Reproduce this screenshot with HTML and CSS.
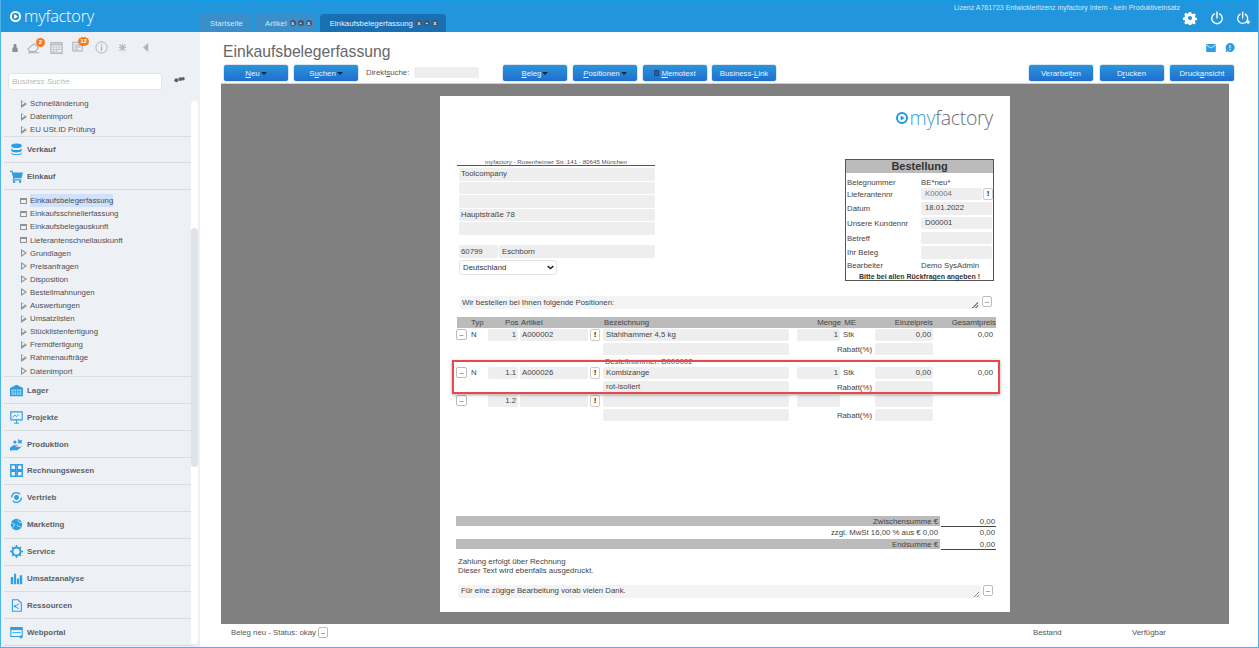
FILE: index.html
```html
<!DOCTYPE html>
<html lang="de">
<head>
<meta charset="utf-8">
<title>Einkaufsbelegerfassung</title>
<link rel="stylesheet" href="styles.css">
</head>
<body>
<div class="app">
  <header class="topbar">
    <div class="brand">
      <svg class="brand-mark" viewBox="0 0 12 12" width="11" height="11"><circle cx="6" cy="6" r="5" fill="none" stroke="#fff" stroke-width="2"/><path d="M4.6 3.4 8.6 6 4.6 8.6Z" fill="#fff"/></svg>
      <span class="brand-name">myfactory</span>
    </div>
    <nav class="tabs">
      <div class="tab"><span>Startseite</span></div>
      <div class="tab"><span>Artikel</span><i class="dot">s</i><i class="dot">▪</i><i class="dot">x</i></div>
      <div class="tab tab-active"><span>Einkaufsbelegerfassung</span><i class="dot">s</i><i class="dot">▪</i><i class="dot">x</i></div>
    </nav>
    <div class="top-right">
      <div class="licence">Lizenz A761723 Entwicklerlizenz myfactory Intern - kein Produktiveinsatz</div>
      <div class="top-icons">
        <svg viewBox="0 0 16 16" width="14" height="14"><path d="M6.700 1h2.600l.4 2 1.300.6 1.800-1.100 1.800 1.800-1.100 1.800.6 1.300 2 .4v2.400l-2 .4-.6 1.300 1.100 1.800-1.800 1.800-1.800-1.100-1.300.6-.4 2H6.700l-.4-2-1.300-.6-1.800 1.100-1.800-1.800 1.100-1.800-.6-1.300-2-.4V7.400l2-.4.6-1.300-1.100-1.800 1.800-1.800 1.800 1.100 1.300-.6Z" fill="#fff"/><circle cx="8" cy="8.100" r="2.400" fill="#2296dc"/></svg>
        <svg viewBox="0 0 16 16" width="14" height="14"><path d="M5 3.300a6 6 0 1 0 6 0" fill="none" stroke="#fff" stroke-width="1.600" stroke-linecap="round"/><path d="M8 1v7" stroke="#fff" stroke-width="1.600" stroke-linecap="round"/></svg>
        <svg viewBox="0 0 18 16" width="15" height="14"><path d="M5 3.300a6 6 0 1 0 6 0" fill="none" stroke="#fff" stroke-width="1.600" stroke-linecap="round"/><path d="M8 1v7" stroke="#fff" stroke-width="1.600" stroke-linecap="round"/><path d="M14.500 10.500v5M12 13h5" stroke="#fff" stroke-width="1.500"/></svg>
      </div>
    </div>
  </header>

  <div class="workspace">
    <aside class="sidebar">
      <div class="quick-icons">
        <svg class="qi-a" viewBox="0 0 12 14" width="8" height="12"><path d="M4 1h4v4l2 3v5H2V8l2-3Z" fill="#8b8f93"/></svg>
        <span class="quick-badge-wrap qi-b">
          <svg viewBox="0 0 16 14" width="14" height="12"><path d="M1 8 8 2l5 5-3 4H3ZM1 12.500h13" fill="none" stroke="#a9aeb3" stroke-width="1.200"/></svg>
          <b class="badge">2</b>
        </span>
        <svg class="qi-c" viewBox="0 0 14 14" width="13" height="13"><path d="M1 2h12v11H1Z" fill="none" stroke="#a9aeb3" stroke-width="1.200"/><path d="M1 4h12M3 6.500h2M6 6.500h2M9 6.500h2M3 9h2M6 9h2M9 9h2M3 11h2M6 11h2" stroke="#a9aeb3" stroke-width="1.200"/></svg>
        <span class="quick-badge-wrap qi-d">
          <svg viewBox="0 0 14 14" width="12" height="13"><path d="M1 1h11v10H1ZM3 4h7M3 6.500h7M3 9h4" fill="none" stroke="#a9aeb3" stroke-width="1.200"/></svg>
          <b class="badge badge-wide">12</b>
        </span>
        <svg class="qi-e" viewBox="0 0 14 14" width="13" height="13"><circle cx="7" cy="7" r="6" fill="none" stroke="#a9aeb3" stroke-width="1"/><path d="M7 6v4.500M7 3.500v1.300" stroke="#a9aeb3" stroke-width="1.400"/></svg>
        <svg class="qi-f" viewBox="0 0 12 12" width="9" height="9"><path d="M2 2l8 8M10 2l-8 8M6 1v10M1 6h10" stroke="#b4b9bd" stroke-width="1.500"/></svg>
        <svg viewBox="0 0 8 12" width="6" height="9"><path d="M7 0v12L0 6Z" fill="#b0b5b9"/></svg>
      </div>
      <div class="search-row">
        <div class="search-box">Business Suche</div>
        <svg viewBox="0 0 14 8" width="11" height="7"><circle cx="3" cy="5" r="2.500" fill="#5c6166"/><circle cx="8" cy="3.500" r="2.500" fill="#5c6166"/><circle cx="11.500" cy="3" r="2.200" fill="#5c6166"/></svg>
      </div>
      <div class="nav-wrap">
        <div class="nav">
          <div class="tree tree-first">
            <div class="leaf"><i class="arrow"></i>Schnelländerung</div>
            <div class="leaf"><i class="arrow"></i>Datenimport</div>
            <div class="leaf"><i class="arrow"></i>EU USt.ID Prüfung</div>
          </div>
          <div class="section">
            <svg viewBox="0 0 16 16" width="13" height="13"><ellipse cx="8" cy="3.500" rx="6.500" ry="2.800" fill="#2b9ee4"/><path d="M1.500 6c0 3.600 13 3.600 13 0v3c0 3.600-13 3.600-13 0Z" fill="#2b9ee4"/><path d="M1.500 11c0 3.600 13 3.600 13 0v1.500c0 3.200-13 3.200-13 0Z" fill="#2b9ee4"/></svg>
            <span>Verkauf</span>
          </div>
          <div class="section">
            <svg viewBox="0 0 16 16" width="13" height="13"><path d="M0 1h3l.8 2H16l-2 7H5.500l-.4 1.500H14V13H3l1-3L2 2.500H0Z" fill="#2b9ee4"/><circle cx="5" cy="14.500" r="1.500" fill="#2b9ee4"/><circle cx="12.500" cy="14.500" r="1.500" fill="#2b9ee4"/></svg>
            <span>Einkauf</span>
          </div>
          <div class="tree tree-main">
            <div class="leaf"><i class="form-icon"></i><mark class="hit">Einkaufsbelegerfassung</mark></div>
            <div class="leaf"><i class="form-icon"></i>Einkaufsschnellerfassung</div>
            <div class="leaf"><i class="form-icon"></i>Einkaufsbelegauskunft</div>
            <div class="leaf"><i class="form-icon"></i>Lieferantenschnellauskunft</div>
            <div class="leaf"><i class="arrow"></i>Grundlagen</div>
            <div class="leaf"><i class="arrow"></i>Preisanfragen</div>
            <div class="leaf"><i class="arrow"></i>Disposition</div>
            <div class="leaf"><i class="arrow"></i>Bestellmahnungen</div>
            <div class="leaf"><i class="arrow"></i>Auswertungen</div>
            <div class="leaf"><i class="arrow"></i>Umsatzlisten</div>
            <div class="leaf"><i class="arrow"></i>Stücklistenfertigung</div>
            <div class="leaf"><i class="arrow"></i>Fremdfertigung</div>
            <div class="leaf"><i class="arrow"></i>Rahmenaufträge</div>
            <div class="leaf"><i class="arrow"></i>Datenimport</div>
          </div>
          <div class="section">
            <svg viewBox="0 0 16 16" width="13" height="13"><path d="M0 5 8 1l8 4v10H0Z" fill="#2b9ee4"/><path d="M2 7h12v6H2Z" fill="#cfe8f8"/><path d="M2 9h12M2 11h12M5 7v6M8 7v6M11 7v6" stroke="#2b9ee4"/></svg>
            <span>Lager</span>
          </div>
          <div class="section">
            <svg viewBox="0 0 16 16" width="13" height="13"><path d="M1 1h14v10H1Z" fill="none" stroke="#2b9ee4" stroke-width="1.400"/><path d="M3 8l3-3 2 2 3-3M8 11v4M5 15h6" fill="none" stroke="#2b9ee4" stroke-width="1.200"/></svg>
            <span>Projekte</span>
          </div>
          <div class="section">
            <svg viewBox="0 0 16 16" width="13" height="13"><path d="M0 12 4 9h5l2 1H7v1h5l3-1-6 5H2l-2 1Z" fill="#2b9ee4"/><circle cx="6" cy="5" r="2" fill="#2b9ee4"/><path d="M10 1l2 2 3-1-1 3 1 2-3-1-2 1Z" fill="#2b9ee4"/></svg>
            <span>Produktion</span>
          </div>
          <div class="section">
            <svg viewBox="0 0 16 16" width="13" height="13"><path d="M1 1h6v6H1ZM9 1h6v6H9ZM1 9h6v6H1ZM9 9h6v6H9Z" fill="none" stroke="#2b9ee4" stroke-width="1.800"/></svg>
            <span>Rechnungswesen</span>
          </div>
          <div class="section">
            <svg viewBox="0 0 16 16" width="13" height="13"><path d="M2 8a6 6 0 0 1 10.500-4M14 8a6 6 0 0 1-10.500 4" fill="none" stroke="#2b9ee4" stroke-width="1.500"/><circle cx="8" cy="8" r="3" fill="#2b9ee4"/></svg>
            <span>Vertrieb</span>
          </div>
          <div class="section">
            <svg viewBox="0 0 16 16" width="13" height="13"><circle cx="8" cy="8" r="7" fill="#2b9ee4"/><path d="M1 6l5 2-3 4M9 2l3 4 3-1M8 9l5 2" fill="none" stroke="#cfe8f8"/></svg>
            <span>Marketing</span>
          </div>
          <div class="section">
            <svg viewBox="0 0 16 16" width="13" height="13"><circle cx="8" cy="8" r="5" fill="none" stroke="#2b9ee4" stroke-width="2.400"/><path d="M8 0v3M8 13v3M0 8h3M13 8h3M2.500 2.500l2 2M11.500 11.500l2 2M13.500 2.500l-2 2M4.500 11.500l-2 2" stroke="#2b9ee4" stroke-width="1.800"/></svg>
            <span>Service</span>
          </div>
          <div class="section">
            <svg viewBox="0 0 16 16" width="13" height="13"><path d="M1 6h3v9H1ZM5 2h2.500v13H5ZM8.500 8H11v7H8.500ZM12 4h3v11h-3Z" fill="#2b9ee4"/></svg>
            <span>Umsatzanalyse</span>
          </div>
          <div class="section">
            <svg viewBox="0 0 16 16" width="13" height="13"><path d="M3 1h7l4 4v10H3Z" fill="none" stroke="#2b9ee4" stroke-width="1.300"/><path d="M11 6 6 9l5 3" fill="none" stroke="#2b9ee4" stroke-width="1.200"/><circle cx="6" cy="9" r="1.400" fill="#2b9ee4"/></svg>
            <span>Ressourcen</span>
          </div>
          <div class="section">
            <svg viewBox="0 0 16 16" width="13" height="13"><path d="M1 2h14v11H1Z" fill="none" stroke="#2b9ee4" stroke-width="1.300"/><path d="M1 2h14v3H1Z" fill="#2b9ee4"/><path d="M3 8h10" stroke="#2b9ee4"/><circle cx="13.500" cy="13.500" r="1.800" fill="#2b9ee4"/></svg>
            <span>Webportal</span>
          </div>
        </div>
        <div class="nav-track"><div class="nav-thumb"></div></div>
      </div>
    </aside>

    <main class="main">
      <div class="main-head">
        <h1 class="page-title">Einkaufsbelegerfassung</h1>
        <div class="head-icons">
          <svg viewBox="0 0 12 10" width="10" height="8"><path d="M0 0h12v10H0Z" fill="#2b9ee4"/><path d="M0 1l6 4 6-4" fill="none" stroke="#fff"/></svg>
          <svg viewBox="0 0 12 12" width="10" height="9"><path d="M6 0a6 6 0 1 1-3 11l-3 1 1-3A6 6 0 0 1 6 0Z" fill="#2b9ee4"/><path d="M6 3v4M6 8v1.500" stroke="#fff" stroke-width="1.400"/></svg>
        </div>
      </div>
      <div class="toolbar">
        <div class="btn-group group-a">
          <button class="btn"><u>N</u>eu<i class="caret"></i></button>
          <button class="btn">S<u>u</u>chen<i class="caret"></i></button>
          <label class="direct">Direkt<u>s</u>uche:</label>
          <div class="direct-input"></div>
        </div>
        <div class="btn-group group-b">
          <button class="btn"><u>B</u>eleg<i class="caret"></i></button>
          <button class="btn"><u>P</u>ositionen<i class="caret"></i></button>
          <button class="btn"><i class="memo"></i><u>M</u>emotext</button>
          <button class="btn btn-link">Business-<u>L</u>ink</button>
        </div>
        <div class="btn-group group-c">
          <button class="btn">Verarbei<u>t</u>en</button>
          <button class="btn">D<u>r</u>ucken</button>
          <button class="btn">Druck<u>a</u>nsicht</button>
        </div>
      </div>

      <div class="stage">
        <div class="paper">
          <div class="paper-logo">
            <svg viewBox="0 0 12 12" width="12" height="12"><circle cx="6" cy="6" r="5" fill="none" stroke="#1f97dd" stroke-width="2"/><path d="M4.600 3.400 8.600 6 4.600 8.600Z" fill="#1f97dd"/></svg>
            <span><em class="logo-my">my</em>factory</span>
          </div>

          <div class="head-block">
            <div class="address">
              <div class="sender">myfactory - Rosenheimer Str. 141 - 80645 München</div>
              <div class="field addr">Toolcompany</div>
              <div class="field addr"></div>
              <div class="field addr"></div>
              <div class="field addr">Hauptstraße 78</div>
              <div class="field addr"></div>
              <div class="city">
                <div class="field zip">60799</div>
                <div class="field town">Eschborn</div>
              </div>
              <div class="country">Deutschland<svg viewBox="0 0 10 6" width="7" height="5"><path d="M1 1l4 3.500L9 1" fill="none" stroke="#222" stroke-width="2"/></svg></div>
            </div>
            <div class="order-box">
              <div class="order-title">Bestellung</div>
              <div class="order-rows">
                <div class="order-row row-first"><span class="ol">Belegnummer</span><span class="ov">BE*neu*</span></div>
                <div class="order-row"><span class="ol">Lieferantennr</span><span class="field ov-f grey-text">K00004</span><i class="bang">!</i></div>
                <div class="order-row"><span class="ol">Datum</span><span class="field ov-w">18.01.2022</span></div>
                <div class="order-row"><span class="ol">Unsere Kundennr</span><span class="field ov-w">D00001</span></div>
                <div class="order-row"><span class="ol">Betreff</span><span class="field ov-w"></span></div>
                <div class="order-row"><span class="ol">Ihr Beleg</span><span class="field ov-w"></span></div>
                <div class="order-row row-last"><span class="ol">Bearbeiter</span><span class="ov">Demo SysAdmin</span></div>
              </div>
              <div class="order-note">Bitte bei allen Rückfragen angeben !</div>
            </div>
          </div>

          <div class="note-line note-top">
            <div class="field note">Wir bestellen bei Ihnen folgende Positionen:<i class="grip"></i></div>
            <i class="mini">–</i>
          </div>

          <div class="table">
            <div class="thead">
              <span class="c-typ">Typ</span><span class="c-pos">Pos</span><span class="c-art">Artikel</span><span class="c-bez">Bezeichnung</span><span class="c-men">Menge</span><span class="c-me">ME</span><span class="c-ein">Einzelpreis</span><span class="c-ges">Gesamtpreis</span>
            </div>

            <div class="pos-row">
              <i class="mini">–</i><span class="typ">N</span><span class="field pos">1</span><span class="field art">A000002</span><i class="bang">!</i><span class="field bez">Stahlhammer 4,5 kg</span><span class="field men">1</span><span class="me">Stk</span><span class="field ein">0,00</span><span class="ges">0,00</span>
            </div>
            <div class="pos-row">
              <span class="field bez"></span><span class="rab">Rabatt(%)</span><span class="field ein"></span>
            </div>
            <div class="extra-line">Bestellnummer: B000002</div>
            <div class="pos-row">
              <i class="mini">–</i><span class="typ">N</span><span class="field pos">1.1</span><span class="field art">A000026</span><i class="bang">!</i><span class="field bez">Kombizange</span><span class="field men">1</span><span class="me">Stk</span><span class="field ein">0,00</span><span class="ges">0,00</span>
            </div>
            <div class="pos-row">
              <span class="field bez">rot-isoliert</span><span class="rab">Rabatt(%)</span><span class="field ein"></span>
            </div>
            <div class="pos-row">
              <i class="mini">–</i><span class="typ"></span><span class="field pos">1.2</span><span class="field art"></span><i class="bang">!</i><span class="field bez"></span><span class="field men"></span><span class="me"></span><span class="field ein"></span><span class="ges"></span>
            </div>
            <div class="pos-row">
              <span class="field bez"></span><span class="rab">Rabatt(%)</span><span class="field ein"></span>
            </div>
            <div class="highlight"></div>
          </div>

          <div class="totals">
            <div class="total-row"><span class="t-bar">Zwischensumme €</span><span class="t-val t-line">0,00</span></div>
            <div class="total-row"><span class="t-plain">zzgl. MwSt 16,00 % aus € 0,00</span><span class="t-val">0,00</span></div>
            <div class="total-row"><span class="t-bar">Endsumme €</span><span class="t-val t-line">0,00</span></div>
          </div>

          <div class="terms">Zahlung erfolgt über Rechnung<br>Dieser Text wird ebenfalls ausgedruckt.</div>

          <div class="note-line note-bottom">
            <div class="field note">Für eine zügige Bearbeitung vorab vielen Dank.<i class="grip"></i></div>
            <i class="mini">–</i>
          </div>
        </div>
      </div>

      <footer class="status">
        <span class="status-text">Beleg neu - Status: okay</span><i class="mini">–</i>
        <span class="status-a">Bestand</span>
        <span class="status-b">Verfügbar</span>
      </footer>
    </main>
  </div>
</div>
</body>
</html>
```
FILE: styles.css
```css
* { box-sizing: border-box; }
html, body { margin: 0; height: 100%; }
body { font-family: "Liberation Sans", Arial, sans-serif; font-size: 7.8px; color: #444; background: #fff; overflow: hidden; }
i, em { font-style: normal; }

.app { width: 1259px; height: 648px; display: flex; flex-direction: column; border-left: 1px solid #4db3e8; border-right: 1px solid #4db3e8; border-bottom: 1px solid #4db3e8; overflow: hidden; }

/* top bar */
.topbar { height: 32px; flex: none; margin: 0 -1px; display: flex; background: #2296dc; border-top: 1px solid #129be4; }
.brand { width: 200px; flex: none; display: flex; align-items: center; gap: 3px; padding: 0 0 0 10px; }
.brand-name { font-family: "Open Sans", sans-serif; font-weight: 300; font-size: 16.300px; color: #fff; letter-spacing: -.2px; line-height: 1; margin-top: -1px; }
.brand-mark { flex: none; }
.tabs { display: flex; align-items: flex-end; gap: 3px; }
.tab { height: 18px; padding: 0 4px 0 10px; display: flex; align-items: center; gap: 1px; background: #3a8fcb; color: #cfe6f6; border-radius: 4px 4px 0 0; min-width: 52px; }
.tab span { margin-right: 1px; }
.tab-active { background: #1a6fb2; color: #e8f3fb; padding: 0 8px 0 10px; margin-left: 1px; }
.dot { width: 6px; height: 6px; border-radius: 50%; background: #3c5a72; color: #fff; font-size: 5px; line-height: 6px; text-align: center; margin-left: 1px; font-weight: bold; overflow: hidden; }
.top-right { margin-left: auto; display: flex; flex-direction: column; align-items: flex-end; padding-right: 8px; }
.licence { font-size: 7px; color: #d5eafa; line-height: 9px; margin: 2px 71px 0 0; }
.top-icons { display: flex; gap: 12.500px; margin-top: -1px; align-items: center; }

/* layout */
.workspace { flex: 1; display: flex; min-height: 0; }
.sidebar { width: 199px; flex: none; background: #edf1f5; display: flex; flex-direction: column; min-height: 0; }

.quick-icons { height: 41px; flex: none; display: flex; align-items: center; padding: 0 0 10px 10px; }
.qi-a { margin-right: 8px; }
.qi-b { margin-right: 9px; }
.qi-c { margin-right: 9px; }
.qi-d { margin-right: 11px; }
.qi-e { margin-right: 10px; }
.qi-f { margin-right: 16px; }
.quick-badge-wrap { position: relative; display: inline-flex; }
.badge { position: absolute; top: -4px; right: -4px; width: 9px; height: 9px; border-radius: 50%; background: #f47b20; color: #fff; font-size: 6px; line-height: 9px; text-align: center; }
.badge-wide { width: 11px; right: -5px; }

.search-row { flex: none; height: 23px; display: flex; align-items: flex-start; padding: 0 0 0 7px; }
.search-box { width: 154px; height: 17px; background: #fff; border: 1px solid #e2e5e8; border-radius: 4px; font-style: italic; color: #b5b8bb; padding: 0 3px; line-height: 15px; font-size: 8px; }
.search-row svg { margin: 3px 0 0 12px; }

.nav-wrap { flex: 1; min-height: 0; display: flex; position: relative; }
.nav { width: 190px; margin-left: 3px; padding-top: 1px; overflow: hidden; height: 551px; flex: none; }
.tree { padding: 4px 0 0 0; border-bottom: 1px solid #d8dcdf; }
.tree-first { height: 39.500px; padding-top: 0; }
.tree-main { height: 187px; }
.leaf { height: 13.100px; line-height: 13.100px; display: flex; align-items: center; padding-left: 17px; color: #4d4d57; white-space: nowrap; }
.arrow { width: 0; height: 0; border-left: 6px solid #8e9296; border-top: 4px solid transparent; border-bottom: 4px solid transparent; position: relative; margin-right: 3px; flex: none; }
.arrow::after { content: ""; position: absolute; left: -5px; top: -2.500px; border-left: 3.500px solid #edf1f5; border-top: 2.500px solid transparent; border-bottom: 2.500px solid transparent; }
.form-icon { width: 7px; height: 6px; border: 1px solid #8e9296; border-top-width: 2px; margin: 0 3px 0 -1px; flex: none; }
.hit { background: #cfe1fb; color: inherit; }
.section { height: 26.900px; border-bottom: 1px solid #d8dcdf; display: flex; align-items: center; gap: 4px; padding-left: 6px; color: #5b5f66; font-size: 7.900px; }
.section svg { flex: none; }
.section span { font-weight: bold; }
.nav-track { position: absolute; left: 190px; top: 5px; width: 7px; bottom: 3px; background: #fff; border-radius: 4px; }
.nav-thumb { margin-top: 127px; height: 239px; background: #dfe3e6; border-radius: 4px; }

/* main */
.main { flex: 1; min-width: 0; display: flex; flex-direction: column; }
.main-head { height: 32px; flex: none; display: flex; justify-content: space-between; align-items: flex-start; padding: 0 23px 0 23px; }
.page-title { margin: 10px 0 0; font-weight: normal; font-size: 15.700px; color: #666; line-height: 19px; height: 19px; }
.head-icons { display: flex; gap: 9px; margin-top: 11px; align-items: center; }

.toolbar { height: 19px; flex: none; display: flex; padding-left: 23px; }
.btn-group { display: flex; align-items: flex-start; }
.group-a { width: 279px; gap: 4px; }
.group-b { gap: 4px; }
.group-c { margin-left: auto; margin-right: 23px; gap: 4.500px; }
.btn { width: 66px; height: 18px; padding: 0; border: 1px solid #dbe7f1; border-radius: 3px; background: linear-gradient(#2b95d9, #1f6fcf); color: #eaf4fc; font: 7.800px "Liberation Sans", Arial, sans-serif; display: inline-flex; align-items: center; justify-content: center; }
.btn-link { margin-left: -1px; }
.caret { width: 0; height: 0; border-left: 3px solid transparent; border-right: 3px solid transparent; border-top: 3px solid #16253a; margin-left: 1px; }
.memo { width: 5px; height: 6px; background: #2a5f97; border: 1px solid #1c4a80; margin-right: 2px; }
.direct { margin: 3px 0 0 3px; color: #555; line-height: 11px; width: 44px; }
.direct-input { width: 65px; height: 11px; background: #eee; border-radius: 2px; margin: 3px 0 0 0; }

.stage { width: 1008px; height: 541px; margin: 0 0 0 21px; background: #808080; border-top: 1px solid #cfcfcf; flex: none; padding: 12px 0 0 219px; }
.paper { width: 570px; height: 516px; background: #fff; color: #444; }
.paper-logo { height: 62px; display: flex; justify-content: flex-end; align-items: center; gap: 2px; padding: 0 17px 19px 0; }
.paper-logo span { font-family: "Open Sans", sans-serif; font-weight: 300; font-size: 19.500px; color: #66707a; letter-spacing: -.3px; }
.logo-my { color: #3aa0e0; }
.paper-logo svg { flex: none; }

.head-block { display: flex; justify-content: space-between; padding: 1px 16px 0 17px; height: 122px; }
.address { width: 198px; }
.sender { height: 7px; font-size: 6.200px; line-height: 7px; text-align: center; color: #555; border-bottom: 1px solid #555; box-sizing: content-box; margin-top: -1px; margin-bottom: 2px; }
.field { background: #eee; border-radius: 2px; display: block; line-height: 12px; height: 12.500px; padding: 0 2px; color: #444; overflow: hidden; white-space: nowrap; }
.addr { margin: 0 0 1px 2px; }
.city { display: flex; gap: 1px; margin: 10.500px 0 2px 2px; }
.zip { width: 39px; line-height: 13px; }
.town { flex: 1; padding-left: 3px; line-height: 13px; }
.country { width: 98px; height: 15px; margin-left: 2px; border: 1px solid #e3e3e3; border-radius: 3px; display: flex; align-items: center; justify-content: space-between; padding: 0 2px 0 3px; color: #333; }

.order-box { width: 149px; height: 122px; border: 1px solid #555; display: flex; flex-direction: column; }
.order-title { height: 13px; background: #bbb; text-align: center; font-weight: bold; font-size: 11px; line-height: 13px; color: #333; flex: none; }
.order-rows { flex: 1; padding-top: 2px; min-height: 0; }
.order-row { display: flex; height: 14.700px; align-items: flex-start; padding-left: 1px; line-height: 12.500px; }
.order-row .ol { line-height: 14.500px; }
.row-first { height: 12.500px; }
.row-first .ol, .row-first .ov { line-height: 16.500px; }
.row-last { height: 9px; }
.order-row.row-last .ol, .row-last .ov { line-height: 9px; }
.ol { width: 74px; flex: none; }
.ov-f { width: 62px; padding-left: 4px; }
.ov-w { width: 71px; padding-left: 4px; }
.grey-text { color: #777; }
.bang { width: 10px; height: 12px; border: 1px solid #ccc; border-radius: 2px; font-weight: bold; font-size: 8px; line-height: 10px; text-align: center; color: #222; margin-left: 1px; flex: none; background: #fff; }
.order-note { height: 10px; font-size: 7px; font-weight: bold; text-align: center; line-height: 13px; color: #333; flex: none; }

.note-line { display: flex; align-items: flex-start; gap: 2px; }
.note-top { padding: 16px 0 0 20px; }
.note-bottom { padding: 0 0 0 18px; margin-top: 10px; }
.note { position: relative; padding-left: 2px; background: #f3f3f3; }
.note-top .note { width: 520px; line-height: 13px; }
.note-bottom .note { width: 523px; padding-left: 3px; }
.grip { position: absolute; right: 2px; bottom: 1px; width: 6px; height: 6px; background: linear-gradient(135deg, transparent 50%, #888 50%, #888 60%, transparent 60%, transparent 75%, #888 75%, #888 85%, transparent 85%); }
.mini { width: 10px; height: 11px; border: 1px solid #bbb; border-radius: 2px; font-size: 7px; line-height: 9px; text-align: center; color: #555; flex: none; display: inline-block; background: #fff; }

.table { position: relative; margin: 8px 14px 0 17px; height: 199px; }
.thead { height: 11px; background: #bbb; position: relative; line-height: 11px; color: #444; margin-bottom: 1px; }
.thead span { position: absolute; top: 0; }
.c-typ { left: 14px; }
.c-pos { left: 48px; }
.c-art { left: 64px; }
.c-bez { left: 147px; }
.c-men { right: 155px; }
.c-me { right: 140px; }
.c-ein { right: 63px; }
.c-ges { right: 0; }

.pos-row { height: 14px; display: grid; grid-template-columns: 11px 20px 30px 2px 68px 2px 10px 3px 186px 8px 43px 3px 32px 58px 60px; align-items: start; }
.pos-row > .mini { grid-column: 1; margin-left: -1px; width: 11px; }
.typ { grid-column: 2; padding-left: 3px; line-height: 12.500px; }
.pos { grid-column: 3; text-align: right; padding-right: 2px; }
.art { grid-column: 5; padding-left: 2px; }
.pos-row > .bang { grid-column: 7; margin-left: 0; }
.bez { grid-column: 9; padding-left: 3px; }
.men { grid-column: 11; text-align: right; padding-right: 2px; }
.me { grid-column: 13; line-height: 12.500px; }
.rab { grid-column: 10 / 14; text-align: right; line-height: 13px; padding-right: 3px; }
.ein { grid-column: 14; text-align: right; padding-right: 2px; }
.ges { grid-column: 15; text-align: right; line-height: 12.500px; }
.extra-line { height: 10px; line-height: 9px; padding-left: 148px; color: #555; overflow: hidden; }
.highlight { position: absolute; left: -5px; top: 43px; width: 548px; height: 34px; border: 2px solid #e8474c; box-shadow: 0 1px 3px rgba(0,0,0,.35); pointer-events: none; }

.totals { margin: 0 14px 0 16px; }
.total-row { display: flex; height: 11.500px; align-items: flex-start; }
.t-bar { width: 484px; height: 10px; background: #bbb; text-align: right; padding-right: 2px; line-height: 11px; color: #444; }
.t-plain { width: 484px; text-align: right; padding-right: 2px; line-height: 11.500px; }
.t-val { width: 55px; margin-left: 1px; text-align: right; padding-right: 1px; line-height: 11px; }
.t-line { height: 11px; border-bottom: 1px solid #444; }

.terms { margin: 7px 0 0 18px; line-height: 9px; height: 18px; color: #444; }

.status { height: 23px; flex: none; position: relative; display: flex; align-items: flex-start; padding: 3px 0 0 31px; color: #555; line-height: 11px; }
.status-text { margin-right: 2px; }
.status-a { position: absolute; left: 833px; top: 3px; }
.status-b { position: absolute; left: 932px; top: 3px; }
```
